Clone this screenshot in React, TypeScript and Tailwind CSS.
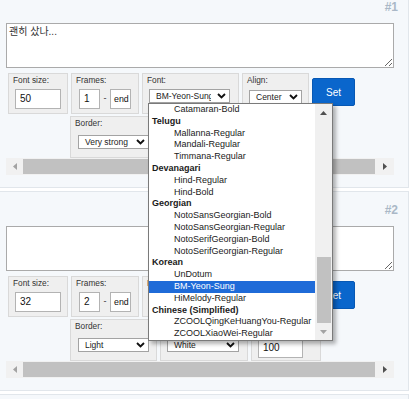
import React from 'react';
import clsx from 'clsx';

const FONT = '"Liberation Sans", "Noto Sans CJK KR", Arial, sans-serif';

function Chevron() {
  return (
    <svg width="9" height="6" viewBox="0 0 9 6" className="shrink-0">
      <path d="M1 1l3.5 3.4L8 1" fill="none" stroke="#111" strokeWidth="1.9" />
    </svg>
  );
}

function Select({ value, className }: { value: string; className: string }) {
  return (
    <div className={`flex h-[14px] items-center border border-[#a3a3a3] bg-white pr-[3px] ${className}`}>
      <span className="mr-[6px] flex-1 overflow-hidden whitespace-nowrap pl-[6px] text-[8.5px] leading-[12px] text-[#222]">
        {value}
      </span>
      <Chevron />
    </div>
  );
}

function Field({ value, className, text = 'text-[10px]' }: { value: string; className: string; text?: string }) {
  return (
    <div className={`flex h-[20px] items-center border border-[#b3b3b3] bg-white ${className}`}>
      <span className={`${text} leading-[12px] text-[#111]`}>{value}</span>
    </div>
  );
}

function Box({ label, className, children }: { label: string; className: string; children?: React.ReactNode }) {
  return (
    <div className={`shrink-0 border border-[#d9d9d9] bg-[#efefef] pl-[4px] pt-[1px] ${className}`}>
      <div className="text-[8.3px] leading-[10px] text-[#333]">{label}</div>
      {children}
    </div>
  );
}

function Arrow({ dir, color }: { dir: 'left' | 'right' | 'up' | 'down'; color: string }) {
  const pts = {
    left: '4,0 4,7 0,3.5',
    right: '0,0 0,7 4,3.5',
    up: '0,4 7,4 3.5,0',
    down: '0,0 7,0 3.5,4',
  }[dir];
  const horiz = dir === 'left' || dir === 'right';
  return (
    <svg width={horiz ? 4 : 7} height={horiz ? 7 : 4} viewBox={horiz ? '0 0 4 7' : '0 0 7 4'}>
      <polygon points={pts} fill={color} />
    </svg>
  );
}

type CardProps = {
  n: number;
  text: string;
  size: string;
  frame: string;
  border: string;
};

function Card({ n, text, size, frame, border }: CardProps) {
  return (
    <div className="h-[200px] w-[409px] shrink-0 border-y border-r border-[#e1e6eb] bg-[#f5f8fb] pl-[6px] pr-[14px] pt-[11px]">
      <div className="-mr-[4px] text-right text-[12px] font-bold leading-[14px] text-[#aab8c7]">#{n}</div>
      <textarea
        readOnly
        value={text}
        className="mt-[9px] block h-[45px] w-[388px] resize-y border border-[#aaaaaa] bg-white p-[2px] text-[10px] leading-[12px] text-[#333] outline-none"
        style={{ fontFamily: FONT }}
      />
      <div className="mt-[5px] w-[388px] overflow-hidden">
        <div className="pl-[2px]">
          <div className="flex h-[41px] items-start gap-[3px]">
            <Box label="Font size:" className="h-[41px] w-[60px]">
              <Field value={size} className="ml-[2px] mt-[4px] w-[46px] pl-[4px]" />
            </Box>
            <Box label="Frames:" className="h-[41px] w-[68px]">
              <div className="ml-[3px] mt-[4px] flex items-center">
                <Field value={frame} className="w-[21px] pl-[4px]" />
                <span className="w-[10px] text-center text-[9px] text-[#333]">-</span>
                <Field value="end" text="text-[8.8px]" className="w-[21px] pl-[3px]" />
              </div>
            </Box>
            <Box label="Font:" className="h-[41px] w-[97px]">
              <Select value="BM-Yeon-Sung" className="ml-[2px] mt-[4px] w-[81px]" />
            </Box>
            <Box label="Align:" className="h-[41px] w-[67px]">
              <Select value="Center" className="ml-[2px] mt-[5px] w-[53px]" />
            </Box>
            <button className="mt-[5px] h-[28px] w-[43px] shrink-0 rounded-[2px] border border-[#0758b4] bg-[#0a66cc] text-[10px] text-white">
              Set
            </button>
          </div>
          <div className="mt-[2px] flex h-[42px] items-start gap-[3px] pl-[62px]">
            <Box label="Border:" className="h-[42px] w-[87px]">
              <Select value={border} className="ml-[3px] mt-[7px] h-[13px] w-[71px]" />
            </Box>
            <Box label="Background:" className="h-[42px] w-[88px]">
              <Select value="White" className="ml-[2px] mt-[7px] h-[13px] w-[72px]" />
            </Box>
            <Box label="Opacity:" className="h-[42px] w-[70px]">
              <Field value="100" className="ml-[2px] mt-[7px] h-[18px] w-[45px] pl-[4px]" />
            </Box>
          </div>
        </div>
        <div className="flex h-[17px] items-center bg-[#f1f1f1]">
          <div className="flex w-[17px] justify-center">
            <Arrow dir="left" color="#a3a3a3" />
          </div>
          <div className="h-[15px] w-[352px] bg-[#c1c1c1]" />
          <div className="flex flex-1 justify-center">
            <Arrow dir="right" color="#505050" />
          </div>
        </div>
      </div>
    </div>
  );
}

type Item = { label: string; group?: boolean; selected?: boolean };

const items: Item[] = [
  { label: 'Catamaran-Bold' },
  { label: 'Telugu', group: true },
  { label: 'Mallanna-Regular' },
  { label: 'Mandali-Regular' },
  { label: 'Timmana-Regular' },
  { label: 'Devanagari', group: true },
  { label: 'Hind-Regular' },
  { label: 'Hind-Bold' },
  { label: 'Georgian', group: true },
  { label: 'NotoSansGeorgian-Bold' },
  { label: 'NotoSansGeorgian-Regular' },
  { label: 'NotoSerifGeorgian-Bold' },
  { label: 'NotoSerifGeorgian-Regular' },
  { label: 'Korean', group: true },
  { label: 'UnDotum' },
  { label: 'BM-Yeon-Sung', selected: true },
  { label: 'HiMelody-Regular' },
  { label: 'Chinese (Simplified)', group: true },
  { label: 'ZCOOLQingKeHuangYou-Regular' },
  { label: 'ZCOOLXiaoWei-Regular' },
];

function Dropdown() {
  return (
    <div className="absolute left-[148px] top-[103px] flex h-[238px] w-[185px] border border-[#7a7a7a] bg-white shadow-[3px_3px_4px_rgba(0,0,0,0.3)]">
      <div className="flex-1 overflow-hidden">
        {items.map((it) => (
          <div
            key={it.label}
            className={clsx(
              'h-[11.8px] whitespace-nowrap text-[9px] leading-[11.8px]',
              it.group ? 'pl-[3px] font-bold' : 'pl-[25px]',
              it.selected ? 'bg-[#1f6bd8] text-white' : 'text-[#1a1a1a]'
            )}
          >
            {it.label}
          </div>
        ))}
      </div>
      <div className="flex w-[17px] flex-col items-center bg-[#f0f0f0]">
        <div className="flex h-[17px] items-center">
          <Arrow dir="up" color="#505050" />
        </div>
        <div className="mt-[136px] h-[66px] w-[14px] bg-[#c1c1c1]" />
        <div className="flex flex-1 items-center">
          <Arrow dir="down" color="#a3a3a3" />
        </div>
      </div>
    </div>
  );
}

export default function App() {
  return (
    <div className="relative h-[399px] w-[413px] overflow-hidden bg-white" style={{ fontFamily: FONT }}>
      <div className="-mt-[12px] flex flex-col gap-[3px]">
        <Card n={1} text="괜히 샀나..." size="50" frame="1" border="Very strong" />
        <Card n={2} text="" size="32" frame="2" border="Light" />
        <div className="h-[200px] w-[409px] shrink-0 border-y border-r border-[#e1e6eb] bg-[#f5f8fb]" />
      </div>
      <Dropdown />
    </div>
  );
}
